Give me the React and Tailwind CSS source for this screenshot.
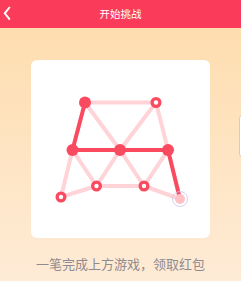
import React from "react";

const nodes = {
  A: [85, 102.5],
  B: [156, 102.5],
  C: [72.5, 150],
  D: [120, 150],
  E: [168, 150],
  F: [96.5, 186],
  G: [144, 186],
  H: [61, 197],
  I: [180, 199],
};

const lightEdges = [
  ["A", "B"],
  ["A", "D"],
  ["B", "D"],
  ["B", "E"],
  ["C", "F"],
  ["D", "F"],
  ["D", "G"],
  ["E", "G"],
  ["F", "G"],
  ["H", "C"],
  ["H", "F"],
  ["G", "I"],
];

const redPath = ["A", "C", "D", "E", "I"];

const PuzzleBoard = () => (
  <svg width="179" height="178" viewBox="31 60 179 178">
    {lightEdges.map(([a, b]) => (
      <line
        key={a + b}
        x1={nodes[a][0]}
        y1={nodes[a][1]}
        x2={nodes[b][0]}
        y2={nodes[b][1]}
        stroke="#ffd3d7"
        strokeWidth="4"
        strokeLinecap="round"
      />
    ))}
    <polyline
      points={redPath.map((k) => nodes[k].join(",")).join(" ")}
      fill="none"
      stroke="#fa4a60"
      strokeWidth="4"
      strokeLinejoin="round"
    />
    {["A", "C", "D", "E"].map((k) => (
      <circle key={k} cx={nodes[k][0]} cy={nodes[k][1]} r="6" fill="#fa4a60" />
    ))}
    {["B", "F", "G", "H"].map((k) => (
      <g key={k}>
        <circle cx={nodes[k][0]} cy={nodes[k][1]} r="5.5" fill="#fa4a60" />
        <circle cx={nodes[k][0]} cy={nodes[k][1]} r="2.2" fill="#fff" />
      </g>
    ))}
    <circle cx={nodes.I[0]} cy={nodes.I[1]} r="5" fill="#ffc0c6" />
    <circle
      cx={nodes.I[0]}
      cy={nodes.I[1]}
      r="7.5"
      fill="none"
      stroke="#c9c8ec"
      strokeWidth="0.8"
    />
  </svg>
);

export default function App() {
  return (
    <div
      className="relative w-[241px] h-[281px] overflow-hidden bg-gradient-to-b from-[#fedcab] to-[#feebd6]"
      style={{ fontFamily: '"Noto Sans CJK SC", "Noto Sans", sans-serif' }}
    >
      <div className="relative h-[28px] bg-[#fa3b59] flex items-center justify-center">
        <svg
          className="absolute left-[3px] top-[6px]"
          width="8"
          height="15"
          viewBox="0 0 8 15"
        >
          <polyline
            points="6.8,1 1.8,7.3 6.8,13.6"
            fill="none"
            stroke="#fff"
            strokeWidth="2"
          />
        </svg>
        <span className="text-white text-[10.5px] leading-none">开始挑战</span>
      </div>

      <div className="mt-[32px] mx-auto w-[179px] h-[178px] bg-white rounded-[6px]">
        <PuzzleBoard />
      </div>

      <p className="mt-[19px] text-center text-[13px] leading-[14px] text-[#8f8a8f]">
        一笔完成上方游戏，领取红包
      </p>

      <div className="absolute right-[-6px] top-[115px] w-[8px] h-[42px] bg-white border border-[#d8ccc0] rounded-[3px]" />
    </div>
  );
}
